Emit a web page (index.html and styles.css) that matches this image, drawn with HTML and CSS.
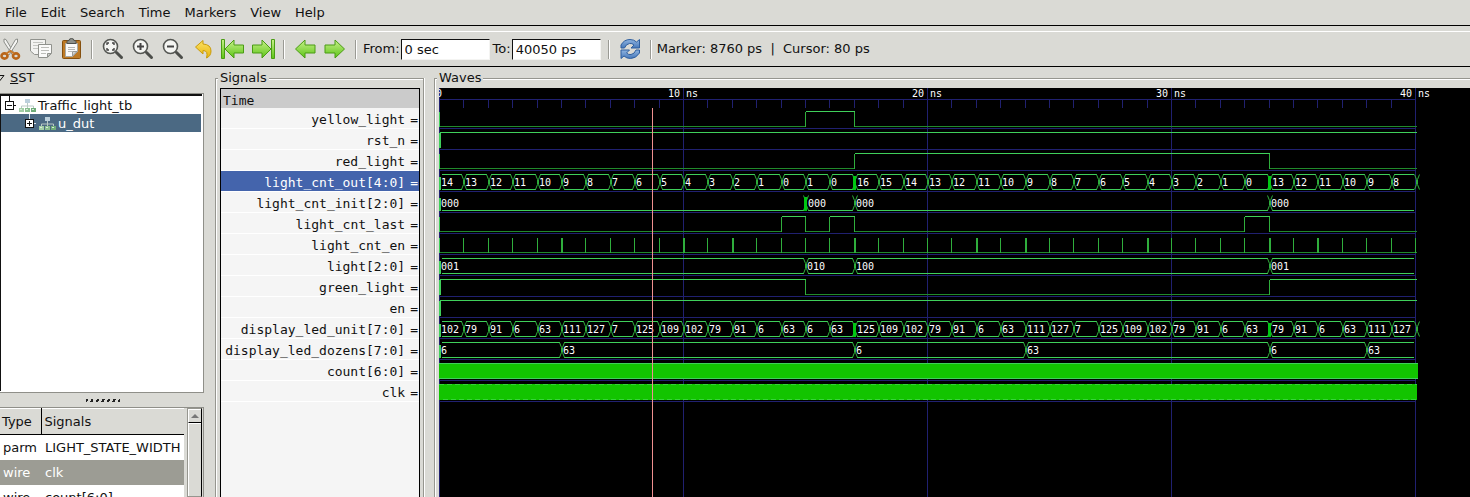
FILE: index.html
```html
<!DOCTYPE html>
<html lang="en">
<head>
<meta charset="utf-8">
<title>Waveform viewer</title>
<link rel="stylesheet" href="styles.css">
</head>
<body>
<svg class="defs" aria-hidden="true">
  <defs>
    <linearGradient id="leaf" x1="0" y1="0" x2="0" y2="1"><stop offset="0" stop-color="#c8f08a"/><stop offset="1" stop-color="#5cc416"/></linearGradient>
    <linearGradient id="gold" x1="0" y1="0" x2="0" y2="1"><stop offset="0" stop-color="#fbe266"/><stop offset="1" stop-color="#e8b40c"/></linearGradient>
    <linearGradient id="sky" x1="0" y1="0" x2="0" y2="1"><stop offset="0" stop-color="#8fb4e0"/><stop offset="1" stop-color="#4678ba"/></linearGradient>
    <symbol id="lens" viewBox="0 0 24 24">
      <path d="M15.500 15.500L20.500 20.500" stroke="#4c4e4a" stroke-width="3" stroke-linecap="round"/>
      <circle cx="9.500" cy="9.500" r="7" fill="#f4f5f2" stroke="#555753" stroke-width="1.600"/>
    </symbol>
    <symbol id="hier" viewBox="0 0 17 14">
      <path d="M8.500 5V8M2.500 10V8H14.500V10M8.500 8V10" fill="none" stroke="#b9c9c4"/>
      <rect x="6" y="1" width="5" height="4" fill="#bcd0dc"/>
      <rect x="0" y="10" width="5" height="4" fill="#a3cfa6"/><rect x="6" y="10" width="5" height="4" fill="#8abf90"/><rect x="12" y="10" width="5" height="4" fill="#6fac78"/>
      <path d="M1 11.500h2M7 11.500h2M13 11.500h2" stroke="#d7ecd8"/>
    </symbol>
  </defs>
</svg>

<nav class="menubar">
  <button>File</button><button>Edit</button><button>Search</button><button>Time</button><button>Markers</button><button>View</button><button>Help</button>
</nav>

<div class="toolbar">
  <button class="tool tool-first" aria-label="Cut"><svg viewBox="0 0 24 24">
    <path d="M5 2L7 2.500L15.500 17L13.500 18L5 5Z" fill="#f2f2f0" stroke="#8b8d88"/>
    <path d="M18.500 2L16.500 2.500L8 17L10 18L18.500 5Z" fill="#f7f7f5" stroke="#8b8d88"/>
    <ellipse cx="5.500" cy="19" rx="3" ry="2.600" fill="none" stroke="#b9661a" stroke-width="2.600"/><ellipse cx="17" cy="19" rx="3" ry="2.600" fill="none" stroke="#b9661a" stroke-width="2.600"/>
    <path d="M7.500 16.500L11.500 14L15 16.500" fill="none" stroke="#c97a2a" stroke-width="2"/></svg></button>
  <button class="tool" aria-label="Copy"><svg viewBox="0 0 24 24">
    <path d="M1.500 2.500H16.500V17.500H5.500L1.500 14Z" fill="#f3f3f1" stroke="#90928d"/>
    <path d="M4 5.500H14M4 8.500H9M4 11.500H9" stroke="#c4c5c1"/>
    <path d="M9.500 7.500H22.500V16.500L18.500 20.500H9.500Z" fill="#fafaf9" stroke="#90928d"/>
    <path d="M12 10.500H20M12 13.500H20M12 16.500H17" stroke="#bcbdb9"/><path d="M22 16.500H18.500V20Z" fill="#d5d6d2" stroke="#90928d"/></svg></button>
  <button class="tool" aria-label="Paste"><svg viewBox="0 0 24 24">
    <rect x="3.500" y="3.500" width="18" height="18" rx="1" fill="#bd7a25" stroke="#85500f"/>
    <path d="M6.500 6.500H18.500V14.500L13.500 19.500H6.500Z" fill="#fafaf9" stroke="#a9aaa5"/>
    <path d="M9 10.500H16M9 12.500H16M9 14.500H13" stroke="#b7b8b4"/><path d="M18 14.500H13.500V19Z" fill="#d3d4d0" stroke="#999a96"/>
    <path d="M8 6.500V4.500Q8 3.500 10 3.500Q10 1.500 12.500 1.500Q15 1.500 15 3.500Q17 3.500 17 4.500V6.500Z" fill="#8d908a" stroke="#4f514d"/></svg></button>
  <span class="sep"></span>
  <button class="tool" aria-label="Zoom fit"><svg viewBox="0 0 24 24"><use href="#lens"/><path d="M6 8V6H8M11 6H13V8M13 11V13H11M8 13H6V11" fill="none" stroke="#444" stroke-width="1.400"/></svg></button>
  <button class="tool" aria-label="Zoom in"><svg viewBox="0 0 24 24"><use href="#lens"/><path d="M6 9.500H13M9.500 6V13" stroke="#444" stroke-width="2"/></svg></button>
  <button class="tool" aria-label="Zoom out"><svg viewBox="0 0 24 24"><use href="#lens"/><path d="M6 9.500H13" stroke="#444" stroke-width="2"/></svg></button>
  <button class="tool" aria-label="Undo zoom"><svg viewBox="0 0 24 24"><path d="M4.500 10L12 3.500V7Q20 7.500 20 14Q20 19 15.500 21Q17.500 13.500 12 13.500V17Z" fill="url(#gold)" stroke="#c99b0a"/></svg></button>
  <button class="tool" aria-label="Zoom to start"><svg viewBox="0 0 24 24"><path d="M.500 2.500H3.500V21.500H.500Z" fill="url(#leaf)" stroke="#4a9c14"/><path d="M4 12L13 3V8H22.500V16H13V21Z" fill="url(#leaf)" stroke="#4a9c14" stroke-linejoin="round"/></svg></button>
  <button class="tool" aria-label="Zoom to end"><svg viewBox="0 0 24 24"><path d="M20.500 2.500H23.500V21.500H20.500Z" fill="url(#leaf)" stroke="#4a9c14"/><path d="M20 12L11 3V8H1.500V16H11V21Z" fill="url(#leaf)" stroke="#4a9c14" stroke-linejoin="round"/></svg></button>
  <span class="sep"></span>
  <button class="tool" aria-label="Previous edge"><svg viewBox="0 0 24 24"><path d="M2.500 12L12 3V8H22V16H12V21Z" fill="url(#leaf)" stroke="#4a9c14" stroke-linejoin="round"/></svg></button>
  <button class="tool" aria-label="Next edge"><svg viewBox="0 0 24 24"><path d="M21.500 12L12 3V8H2V16H12V21Z" fill="url(#leaf)" stroke="#4a9c14" stroke-linejoin="round"/></svg></button>
  <span class="sep"></span>
  <label class="range" for="from">From:</label><input class="time-input" id="from" type="text" value="0 sec">
  <label class="range range-to" for="to">To:</label><input class="time-input" id="to" type="text" value="40050 ps">
  <span class="sep sep-wide"></span>
  <button class="tool" aria-label="Reload"><svg viewBox="0 0 24 24">
    <path d="M3 11V8Q6 2.500 12 2.500Q16 2.500 18.500 5L21.500 2.500V11H13L16 8Q14 6 11.500 6.500Q8 7 6.500 11Z" fill="url(#sky)" stroke="#2f5f9f"/>
    <path d="M21.500 13V16Q18 21.500 12.500 21.500Q8.500 21.500 6 19L3 21.500V13H11.500L8.500 16Q10.500 18 13 17.500Q16.500 17 18 13Z" fill="url(#sky)" stroke="#2f5f9f"/></svg></button>
  <span class="sep"></span>
  <span class="status">Marker: 8760 ps&nbsp; |&nbsp; Cursor: 80 ps</span>
</div>

<main class="workspace">
  <section class="side">
    <div class="sst-title"><svg class="triangle" viewBox="0 0 6 8"><path d="M-4 1.500H4L0 6.500Z" fill="none" stroke="#111"/></svg><span><u>S</u>ST</span></div>
    <div class="tree">
      <div class="node">
        <svg class="expander" viewBox="0 0 11 18"><path d="M4.500 0V5M9 9.500H11" stroke="#111"/><rect x=".500" y="5.500" width="8" height="8" fill="#fff" stroke="#111"/><path d="M2 9.500H7" stroke="#111"/></svg>
        <svg class="hier"><use href="#hier"/></svg><span>Traffic_light_tb</span>
      </div>
      <div class="node child selected">
        <svg class="expander" viewBox="0 0 11 18"><path d="M4.500 0V5M9 9.500H11" stroke="#dfe6ec"/><rect x=".500" y="5.500" width="8" height="8" fill="#fff" stroke="#111"/><path d="M2 9.500H7M4.500 7V12" stroke="#111"/></svg>
        <svg class="hier"><use href="#hier"/></svg><span>u_dut</span>
      </div>
    </div>
    <div class="grip"></div>
    <div class="list">
      <table class="vars">
        <thead><tr><th class="type">Type</th><th>Signals</th></tr></thead>
        <tbody>
          <tr><td>parm</td><td>LIGHT_STATE_WIDTH</td></tr>
          <tr class="picked"><td>wire</td><td>clk</td></tr>
          <tr><td>wire</td><td>count[6:0]</td></tr>
        </tbody>
      </table>
      <div class="scroll"><button class="scroll-up" aria-label="Scroll up"></button><div class="thumb"></div></div>
    </div>
  </section>

  <section class="frame signals">
    <h2 class="frame-title">Signals</h2>
    <div class="names">
      <div class="time">Time</div>
      <ul class="name-list">
        <li>yellow_light<i>=</i></li><li>rst_n<i>=</i></li><li>red_light<i>=</i></li>
        <li class="active">light_cnt_out[4:0]<i>=</i></li><li>light_cnt_init[2:0]<i>=</i></li>
        <li>light_cnt_last<i>=</i></li><li>light_cnt_en<i>=</i></li><li>light[2:0]<i>=</i></li>
        <li>green_light<i>=</i></li><li>en<i>=</i></li><li>display_led_unit[7:0]<i>=</i></li>
        <li>display_led_dozens[7:0]<i>=</i></li><li>count[6:0]<i>=</i></li><li>clk<i>=</i></li>
      </ul>
    </div>
  </section>

  <section class="frame waves">
    <h2 class="frame-title">Waves</h2>
    <svg class="plot" id="plot"></svg>
  </section>
</main>
<script src="waves.js"></script>
</body>
</html>
```

FILE: styles.css
```css
* { box-sizing: border-box; }

html, body { height: 100%; }

body {
  margin: 0;
  display: flex;
  flex-direction: column;
  overflow: hidden;
  background: #dadad5;
  color: #111;
  font: 13px "DejaVu Sans", sans-serif;
}

button {
  margin: 0;
  padding: 0;
  border: 0;
  background: none;
  color: inherit;
  font: inherit;
}

.defs { position: absolute; width: 0; height: 0; }

.menubar {
  flex: none;
  display: flex;
  align-items: center;
  gap: 14px;
  height: 26px;
  padding-left: 5px;
  border-bottom: 1px solid #000;
}

.toolbar {
  flex: none;
  display: flex;
  align-items: center;
  height: 36px;
  margin-top: 5px;
  border-top: 1px solid #fff;
  border-bottom: 1px solid #000;
  white-space: nowrap;
}

.tool {
  flex: none;
  display: flex;
  justify-content: center;
  width: 30px;
}
.tool svg { width: 24px; height: 24px; }
.tool-first { margin-left: -4px; }

.sep {
  flex: none;
  width: 2px;
  height: 19px;
  margin: 0 5px;
  border-left: 1px solid #9a9a94;
  border-right: 1px solid #fff;
}
.sep-wide { margin-left: 7px; }

.range { padding: 0 0 2px 1px; }
.range-to { padding-left: 3px; }

.time-input {
  width: 89px;
  height: 21px;
  margin-left: 1px;
  padding: 0 3px;
  border: 1px solid #f4f4f2;
  border-top: 1px solid #111;
  border-left: 1px solid #111;
  background: #fff;
  color: #111;
  font: inherit;
}

.status { padding-bottom: 2px; }

.workspace {
  flex: 1;
  display: flex;
  min-height: 0;
  padding-top: 2px;
}

.side {
  flex: none;
  display: flex;
  flex-direction: column;
  width: 204px;
  margin-right: 11px;
}

.sst-title {
  display: flex;
  align-items: center;
  gap: 4px;
  height: 17px;
}
.triangle { width: 6px; height: 8px; }

.tree {
  flex: none;
  height: 300px;
  margin-top: 7px;
  border: 1px solid #8f8f89;
  border-left: 0;
  box-shadow: inset -1px -1px #fff, inset 1px 2px #111;
  background: #fff;
  padding: 2px 2px 0 1px;
}

.node {
  display: flex;
  align-items: center;
  height: 18px;
  padding-left: 4px;
}
.node.child { padding-left: 24px; }
.node.selected { background: #4b6983; color: #fff; }
.expander { width: 11px; height: 18px; }
.hier { width: 17px; height: 14px; margin: 0 2px 0 3px; }

.grip {
  flex: none;
  width: 34px;
  height: 3px;
  margin: 6px 0 5px 86px;
  background: repeating-linear-gradient(115deg, #222 0 2px, transparent 2px 5px);
}

.list {
  flex: 1;
  display: flex;
  min-height: 0;
  overflow: hidden;
  border-top: 1px solid #8f8f89;
  border-right: 1px solid #8f8f89;
}

.vars {
  flex: none;
  align-self: flex-start;
  width: 184px;
  table-layout: fixed;
  border-collapse: collapse;
  background: #fff;
}
.vars th {
  height: 26px;
  padding: 0 3px;
  border-bottom: 1px solid #000;
  border-top: 1px solid #fff;
  background: #dadad5;
  font-weight: normal;
  text-align: left;
}
.vars .type { width: 41px; padding-left: 2px; border-right: 1px solid #000; }
.vars td { height: 25px; padding: 0 0 0 4px; white-space: nowrap; }
.vars td:first-child { padding-left: 3px; }
.picked { background: #9c9c94; color: #fff; }

.scroll {
  display: flex;
  flex-direction: column;
  width: 15px;
  margin-left: 3px;
  border: 1px solid #96968f;
  border-right-color: #000;
}
.scroll-up {
  display: flex;
  align-items: center;
  justify-content: center;
  flex: none;
  height: 14px;
  border-top: 1px solid #fff;
  border-left: 1px solid #fff;
  border-bottom: 1px solid #000;
}
.scroll-up::before {
  content: "";
  border: 4px solid transparent;
  border-top: 0;
  border-bottom: 4px solid #777;
}
.thumb { flex: 1; border-top: 1px solid #fff; border-left: 1px solid #fff; }

.frame {
  display: flex;
  flex-direction: column;
  margin-top: 9px;
  padding: 0 3px 0 4px;
  border: 1px solid #96968f;
  border-bottom: 0;
  box-shadow: inset 1px 1px #fff, 1px 0 #fff;
}
.frame-title {
  flex: none;
  align-self: flex-start;
  height: 17px;
  margin: -9px 0 1px -2px;
  padding: 0 2px;
  background: #dadad5;
  font-size: 13px;
  font-weight: normal;
  line-height: 15px;
}

.signals { flex: none; width: 209px; margin-right: 10px; }

.names {
  flex: 1;
  min-height: 0;
  border: 1px solid #000;
  border-bottom: 0;
  background: #f5f5f5;
  font-family: "DejaVu Sans Mono", monospace;
}
.time {
  height: 19px;
  padding-left: 2px;
  background: #cbcbcb;
  line-height: 23px;
}
.name-list { margin: 0; padding: 0; list-style: none; }
.name-list li {
  height: 21px;
  padding-right: 1px;
  border-bottom: 1px solid #fff;
  line-height: 24px;
  text-align: right;
  white-space: nowrap;
}
.name-list i { padding-left: 5px; font-style: normal; }
.name-list .active { background: #4464ac; background-clip: padding-box; color: #fff; }

.waves { flex: 1; min-width: 0; padding-right: 0; border-right: 0; }

.plot {
  flex: 1;
  min-height: 0;
  width: 100%;
  background: #000;
  overflow: hidden;
  shape-rendering: crispEdges;
  font: 10px "DejaVu Sans Mono", monospace;
}
.plot text { fill: #fff; }
.plot .center { text-anchor: middle; }
.grid { stroke: #202070; fill: none; }
.high { stroke: #3fd05a; fill: none; }
.low { stroke: #208a2c; fill: none; }
.edge { stroke: #2fae3c; fill: none; }
.cross { stroke: #2fae3c; fill: none; shape-rendering: auto; }
.glitch { stroke: #00c814; stroke-width: 3; }
.start { stroke: #3fd05a; stroke-width: 2; }
.block { fill: #12c400; }
.speckle { stroke: #36d43a; fill: none; stroke-dasharray: 5 3; }
.marker { stroke: #f09090; }
```

FILE: waves.js
```js
const plot = document.getElementById("plot");
const STEP = 24.4;
const COUNT = 40;
const at = k => Math.round(k * STEP) + 0.5;
const END = at(COUNT) + 1;

function add(tag, attrs, text) {
  const el = document.createElementNS("http://www.w3.org/2000/svg", tag);
  for (const key in attrs) el.setAttribute(key, attrs[key]);
  if (text !== undefined) el.textContent = text;
  plot.appendChild(el);
}
const path = (cls, d) => add("path", { class: cls, d });
const line = (cls, x1, y1, x2, y2) => add("line", { class: cls, x1, y1, x2, y2 });
const highY = row => 23.5 + row * 21;
const lowY = row => 38.5 + row * 21;

// Time ruler and grid
line("grid", 0, 11.5, END - 1, 11.5);
for (let k = 0; k <= COUNT; k++) {
  if (k % 10) line("grid", at(k), 11.5, at(k), 19.5);
  else line("grid", at(k), 0, at(k), "100%");
}
for (let n = 0; n <= 4; n++) {
  add("text", { class: "center", x: n * 244, y: 9 }, n ? n * 10 + " ns" : "0");
}
for (let row = 0; row < 14; row++) {
  line("grid", 0, 40.5 + row * 21, END - 1, 40.5 + row * 21);
}

// Single-bit trace: list of [start, level]
function bit(row, changes) {
  changes.forEach(([k, level], i) => {
    const next = changes[i + 1] ? at(changes[i + 1][0]) : END;
    const y = level ? highY(row) : lowY(row);
    line(level ? "high" : "low", at(k), y, next, y);
    if (i) line("edge", at(k), highY(row), at(k), lowY(row));
    else line(level ? "start" : "high", level ? 1 : 0.5, highY(row), level ? 1 : 0.5, lowY(row));
  });
}

// Vector trace: list of [start, value]; an all-zero vector has only its lower rail
function bus(row, changes, glitches = [], closed = false) {
  changes.forEach(([k, value], i) => {
    const last = i === changes.length - 1;
    const next = last ? at(COUNT) : at(changes[i + 1][0]);
    const x = at(k);
    if (value !== "000") line("high", x + 2, highY(row), next - 2, highY(row));
    line("high", x + 2, lowY(row), next - 2, lowY(row));
    if (i) cross(row, x);
    else line("start", 1, highY(row) + 2, 1, lowY(row));
    if (glitches.includes(k)) line("glitch", x, highY(row) + 1, x, lowY(row));
    add("text", { x: x + 1.5 + (glitches.includes(k) ? 1 : 0), y: lowY(row) - 3.5 }, value);
  });
  if (closed) cross(row, at(COUNT) + 1);
}
function cross(row, x) {
  const t = highY(row), b = lowY(row);
  path("cross", `M${x - 2} ${t}L${x} ${t + 5}V${b - 5}L${x - 2} ${b}M${x + 3} ${t}L${x + 1} ${t + 5}V${b - 5}L${x + 3} ${b}`);
}
const sequence = values => values.split(" ").map((v, i) => [i, v]);

bit(0, [[0, 0], [15, 1], [17, 0]]);
bit(1, [[0, 1]]);
bit(2, [[0, 0], [17, 1], [34, 0]]);
bus(3, sequence("14 13 12 11 10 9 8 7 6 5 4 3 2 1 0 1 0 16 15 14 13 12 11 10 9 8 7 6 5 4 3 2 1 0 13 12 11 10 9 8"), [17, 34], true);
bus(4, [[0, "000"], [15, "000"], [17, "000"], [34, "000"]], [15]);
bit(5, [[0, 0], [14, 1], [15, 0], [16, 1], [17, 0], [33, 1], [34, 0]]);
bit(6, [[0, 0]]);
for (let k = 1; k <= COUNT; k++) {
  line("edge", at(k), highY(6), at(k), lowY(6));
  if ([5, 10, 12, 17, 22, 24, 29, 34, 36].includes(k)) {
    line("edge", at(k) + 1, highY(6), at(k) + 1, lowY(6));
  }
}
bus(7, [[0, "001"], [15, "010"], [17, "100"], [34, "001"]]);
bit(8, [[0, 1], [15, 0], [34, 1]]);
bit(9, [[0, 1]]);
bus(10, sequence("102 79 91 6 63 111 127 7 125 109 102 79 91 6 63 6 63 125 109 102 79 91 6 63 111 127 7 125 109 102 79 91 6 63 79 91 6 63 111 127"), [17, 34], true);
bus(11, [[0, "6"], [5, "63"], [17, "6"], [24, "63"], [34, "6"], [38, "63"]]);

// Signals that toggle faster than one pixel
add("rect", { class: "block", x: 0, y: 275, width: END + 1, height: 16 });
line("high", 0, 275.5, END + 1, 275.5);
line("high", 0, 290.5, END + 1, 290.5);
add("rect", { class: "block", x: 0, y: 296, width: END, height: 16 });
line("speckle", 0, 296.5, END, 296.5);
line("speckle", 4, 311.5, END, 311.5);

line("marker", 213.5, 20, 213.5, "100%");
```
